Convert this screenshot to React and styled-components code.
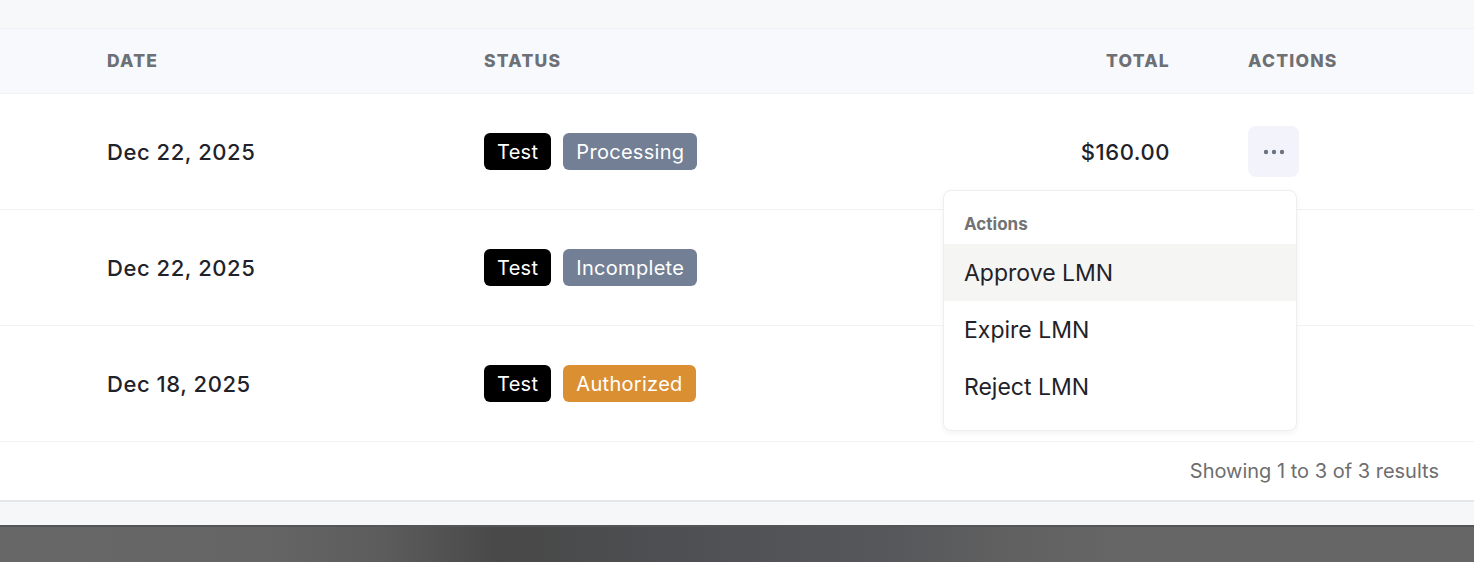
import React from "react";
import styled, { createGlobalStyle } from "styled-components";

const GlobalStyle = createGlobalStyle`
  html, body {
    margin: 0;
    padding: 0;
    background: #f6f7f9;
    font-family: Inter, "Noto Sans", sans-serif;
    color: #1f2329;
    -webkit-font-smoothing: antialiased;
  }
`;

const Page = styled.div`
  width: 1474px;
  height: 562px;
  display: flex;
  flex-direction: column;
  overflow: hidden;
  background: #f6f7f9;
`;

const TopStrip = styled.div`
  height: 28px;
  background: #f7f8fa;
  border-bottom: 1px solid #f0f1f4;
`;

const Card = styled.div`
  background: #ffffff;
  border-bottom: 2px solid #e4e6ea;
  box-shadow: 0 2px 3px rgba(0, 0, 0, 0.04);
`;

const Row = styled.div`
  display: grid;
  grid-template-columns: 377px 1fr 200px 226px;
  align-items: center;
  padding-left: 107px;
  height: ${(p) => p.$height}px;
  background: ${(p) => p.$bg || "#ffffff"};
  border-bottom: 1px solid #f1f2f4;
`;

const HeadCell = styled.div`
  font-size: 17.5px;
  font-weight: 800;
  letter-spacing: 0.07em;
  text-transform: uppercase;
  color: #6d7075;
  text-align: ${(p) => p.$align || "left"};
  padding-right: ${(p) => (p.$align === "right" ? "78px" : "0")};
  margin-top: -2px;
`;

const Cell = styled.div`
  font-size: 22px;
  font-weight: 450;
  letter-spacing: 0.025em;
  color: #1f2329;
  text-align: ${(p) => p.$align || "left"};
  padding-right: ${(p) => (p.$align === "right" ? "78px" : "0")};
  position: relative;
`;

const Badges = styled.div`
  display: flex;
  gap: 12px;
  letter-spacing: 0;
`;

const Badge = styled.span`
  display: inline-flex;
  align-items: center;
  height: 37px;
  padding: 0 13px;
  border-radius: 6px;
  font-size: 20px;
  font-weight: 400;
  letter-spacing: 0.015em;
  color: #ffffff;
  background: ${(p) => p.$bg};
`;

const MoreButton = styled.button`
  width: 51px;
  height: 51px;
  border: none;
  border-radius: 8px;
  background: #f3f4fb;
  display: flex;
  align-items: center;
  justify-content: center;
  padding: 0;
`;

const Menu = styled.div`
  position: absolute;
  top: 64px;
  left: -305px;
  width: 354px;
  box-sizing: border-box;
  padding: 23px 0 15px;
  background: #ffffff;
  border: 1px solid #eceef2;
  border-radius: 8px;
  box-shadow: 0 2px 6px rgba(15, 23, 42, 0.05);
  letter-spacing: 0;
  z-index: 2;
`;

const MenuLabel = styled.div`
  padding: 0 20px 10px;
  font-size: 17px;
  font-weight: 700;
  color: #737373;
`;

const MenuItem = styled.div`
  height: 57px;
  display: flex;
  align-items: center;
  padding: 0 20px;
  font-size: 23px;
  font-weight: 400;
  color: #1f2329;
  background: ${(p) => (p.$active ? "#f5f5f4" : "transparent")};
`;

const Footer = styled.div`
  height: 58px;
  display: flex;
  align-items: center;
  justify-content: flex-end;
  padding-right: 35px;
  font-size: 20px;
  color: #6e6e6e;
`;

const Gap = styled.div`
  height: 23px;
  background: #f6f7f9;
`;

const DarkBar = styled.div`
  flex: 1;
  border-top: 2px solid #555;
  background: linear-gradient(
    90deg,
    #676767 0%,
    #656565 18%,
    #5c5c5c 26%,
    #484848 34%,
    #4c4d4f 42%,
    #515357 52%,
    #55575a 60%,
    #606060 68%,
    #666666 76%,
    #666666 100%
  );
`;

const rows = [
  { date: "Dec 22, 2025", status: "Processing", color: "#727f94", total: "$160.00", menu: true },
  { date: "Dec 22, 2025", status: "Incomplete", color: "#727f94" },
  { date: "Dec 18, 2025", status: "Authorized", color: "#db8f33" },
];

const Dots = () => (
  <svg width="24" height="6" viewBox="0 0 24 6">
    <circle cx="4" cy="3" r="2.2" fill="#6b7280" />
    <circle cx="12" cy="3" r="2.2" fill="#6b7280" />
    <circle cx="20" cy="3" r="2.2" fill="#6b7280" />
  </svg>
);

export default function App() {
  return (
    <Page>
      <GlobalStyle />
      <TopStrip />
      <Card>
        <Row $height={64} $bg="#f8f9fc">
          <HeadCell>Date</HeadCell>
          <HeadCell>Status</HeadCell>
          <HeadCell $align="right">Total</HeadCell>
          <HeadCell>Actions</HeadCell>
        </Row>
        {rows.map((r, i) => (
          <Row key={i} $height={115}>
            <Cell>{r.date}</Cell>
            <Cell>
              <Badges>
                <Badge $bg="#000000">Test</Badge>
                <Badge $bg={r.color}>{r.status}</Badge>
              </Badges>
            </Cell>
            <Cell $align="right">{r.total}</Cell>
            <Cell>
              {r.menu && (
                <>
                  <MoreButton>
                    <Dots />
                  </MoreButton>
                  <Menu>
                    <MenuLabel>Actions</MenuLabel>
                    <MenuItem $active>Approve LMN</MenuItem>
                    <MenuItem>Expire LMN</MenuItem>
                    <MenuItem>Reject LMN</MenuItem>
                  </Menu>
                </>
              )}
            </Cell>
          </Row>
        ))}
        <Footer>Showing 1 to 3 of 3 results</Footer>
      </Card>
      <Gap />
      <DarkBar />
    </Page>
  );
}
